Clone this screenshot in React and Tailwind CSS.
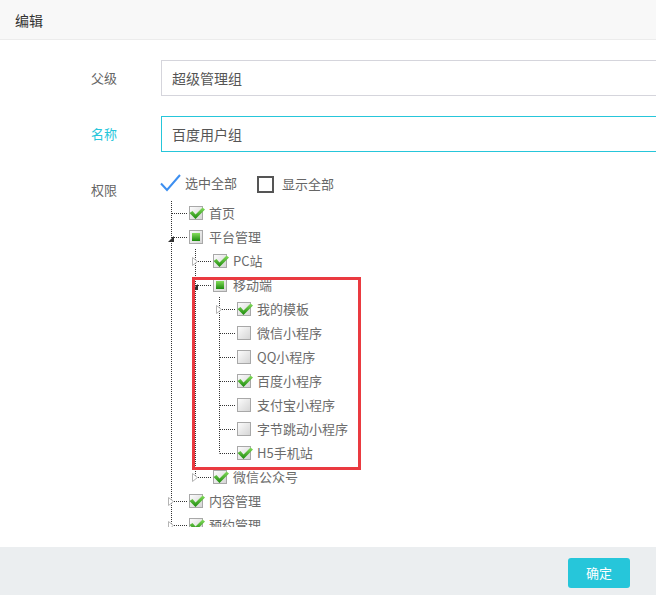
const font = { fontFamily: '"Noto Sans CJK SC", "Noto Sans", sans-serif' };

const tree = [
  { label: "首页", state: "on" },
  {
    label: "平台管理",
    state: "half",
    open: true,
    children: [
      { label: "PC站", state: "on", closed: true },
      {
        label: "移动端",
        state: "half",
        open: true,
        children: [
          { label: "我的模板", state: "on", closed: true },
          { label: "微信小程序", state: "off" },
          { label: "QQ小程序", state: "off" },
          { label: "百度小程序", state: "on" },
          { label: "支付宝小程序", state: "off" },
          { label: "字节跳动小程序", state: "off" },
          { label: "H5手机站", state: "on" },
        ],
      },
      { label: "微信公众号", state: "on", closed: true },
    ],
  },
  { label: "内容管理", state: "on", closed: true },
  { label: "预约管理", state: "on", closed: true },
];

function IndentCell({ line }) {
  return (
    <svg width="24" height="24" className="shrink-0">
      {line && (
        <line x1="12.5" y1="0" x2="12.5" y2="24" stroke="#333" strokeDasharray="1 1" />
      )}
    </svg>
  );
}

function Connector({ last, open, closed }) {
  return (
    <svg width="28" height="24" className="shrink-0">
      <line x1="12.5" y1="0" x2="12.5" y2={last ? 12.5 : 24} stroke="#333" strokeDasharray="1 1" />
      <line x1="13" y1="12.5" x2="28" y2="12.5" stroke="#333" strokeDasharray="1 1" />
      {open && <polygon points="9,17 15,11 15,17" fill="#333" />}
      {closed && (
        <polygon points="9.5,8.5 14.5,12.5 9.5,16.5" fill="#fff" stroke="#b5b5b5" />
      )}
    </svg>
  );
}

function Check({ state }) {
  return (
    <svg width="16" height="14" viewBox="0 0 16 14" className="ml-[2px] shrink-0 overflow-visible">
      <defs>
        <linearGradient id="boxg" x1="0" y1="0" x2="1" y2="1">
          <stop offset="0" stopColor="#fdfdfd" />
          <stop offset="1" stopColor="#d4d4d4" />
        </linearGradient>
        <linearGradient id="greeng" x1="0" y1="0" x2="0" y2="1">
          <stop offset="0" stopColor="#84dc5c" />
          <stop offset="1" stopColor="#1c8a0c" />
        </linearGradient>
      </defs>
      <rect x="0.5" y="0.5" width="13" height="13" fill="url(#boxg)" stroke="#a8a8a8" />
      {state === "half" && <rect x="3" y="3" width="8" height="8" fill="url(#greeng)" />}
      {state === "on" && (
        <path d="M0.5 7 L3.5 5 L6.5 8.5 L13.5 1.5 L16 3.5 L6.5 13 Z" fill="url(#greeng)" />
      )}
    </svg>
  );
}

function Node({ node, lines, last }) {
  return (
    <>
      <div className="flex h-6 items-center">
        {lines.map((l, i) => (
          <IndentCell key={i} line={l} />
        ))}
        <Connector last={last} open={node.open} closed={node.closed} />
        <Check state={node.state} />
        <span className="ml-[4px] text-[13px] text-[#6b6b6b] whitespace-nowrap">{node.label}</span>
      </div>
      {node.open &&
        node.children.map((c, i) => (
          <Node
            key={c.label}
            node={c}
            lines={[...lines, !last]}
            last={i === node.children.length - 1}
          />
        ))}
    </>
  );
}

export default function App() {
  return (
    <div className="w-[656px] h-[595px] bg-white flex flex-col overflow-hidden" style={font}>
      <div className="h-10 shrink-0 bg-[#f8f8f8] border-b border-[#ececec] flex items-center px-[15px] text-sm text-[#333]">
        编辑
      </div>

      <div className="relative flex-1 overflow-hidden pt-5">
        <div className="flex items-start mb-5">
          <div className="w-[117px] shrink-0 text-right text-[13px] leading-9 text-[#666]">父级</div>
          <div className="ml-[44px] w-[520px] shrink-0 h-9 border border-[#d5d5dc] px-[10px] flex items-center text-sm text-[#555]">
            超级管理组
          </div>
        </div>

        <div className="flex items-start mb-5">
          <div className="w-[117px] shrink-0 text-right text-[13px] leading-9 text-[#26c6da]">名称</div>
          <div className="ml-[44px] w-[520px] shrink-0 h-9 border border-[#26c6da] px-[10px] flex items-center text-sm text-[#555]">
            百度用户组
          </div>
        </div>

        <div className="flex items-start">
          <div className="w-[117px] shrink-0 text-right text-[13px] leading-9 text-[#666]">权限</div>
          <div className="ml-[43px] flex flex-col">
            <div className="h-7 flex items-start pt-[2px]">
              <div className="flex items-center">
                <svg width="21" height="18" viewBox="0 0 21 18">
                  <path d="M1 9.5 L7 16 L20 1" fill="none" stroke="#3d8ff0" strokeWidth="2" />
                </svg>
                <span className="ml-[4px] text-[13px] text-[#666] leading-4">选中全部</span>
              </div>
              <div className="ml-[20px] flex items-center">
                <div className="w-[17px] h-[17px] border-2 border-[#555] mt-[2px]" />
                <span className="ml-[8px] text-[13px] text-[#666] leading-4">显示全部</span>
              </div>
            </div>
            <div className="h-[327px] overflow-hidden pt-px -ml-px">
              {tree.map((n) => (
                <Node key={n.label} node={n} lines={[]} last={false} />
              ))}
            </div>
          </div>
        </div>

        <div className="absolute left-[192px] top-[237px] w-[169px] h-[193px] border-[3px] border-[#ea3a40] pointer-events-none" />
      </div>

      <div className="h-12 shrink-0 bg-[#ebeef0] flex items-start justify-end pt-[11px] pr-[26px]">
        <button className="w-[62px] h-[30px] rounded-[3px] bg-[#26c6da] text-white text-[13px]">
          确定
        </button>
      </div>
    </div>
  );
}
